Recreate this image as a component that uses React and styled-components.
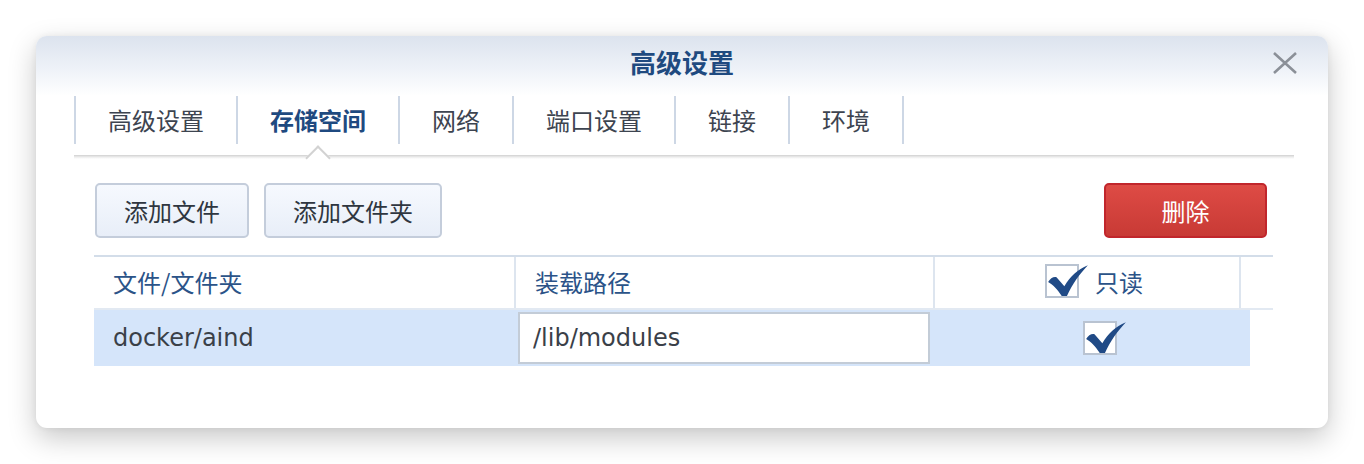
import React from "react";
import styled, { createGlobalStyle } from "styled-components";

const GlobalStyle = createGlobalStyle`
  body {
    margin: 0;
    background: #ffffff;
    font-family: "DejaVu Sans", "Noto Sans CJK SC", sans-serif;
  }
`;

const tabs = [
  { label: "高级设置" },
  { label: "存储空间", active: true },
  { label: "网络" },
  { label: "端口设置" },
  { label: "链接" },
  { label: "环境" }
];

const Check = () => (
  <CheckSvg viewBox="0 0 44 36" width="46" height="38">
    <path
      d="M3 18 C5 14.5 8.5 12.5 11 13.5 L18.5 22 C24 13 31 6 41 2 C33 10.5 26 20 21 31.5 L16 31.5 C12 25 8 21 3 18 Z"
      fill="#204a86"
    />
  </CheckSvg>
);

export default function App() {
  return (
    <Page>
      <GlobalStyle />
      <Dialog>
        <Header>
          <span />
          <Title>高级设置</Title>
          <Close>
            <svg width="26" height="22" viewBox="0 0 26 22">
              <path d="M2 1 L24 21 M24 1 L2 21" stroke="#8b9098" strokeWidth="2.6" />
            </svg>
          </Close>
        </Header>

        <TabBar>
          <Tabs>
            {tabs.map(t => (
              <Tab key={t.label} active={t.active}>
                {t.label}
              </Tab>
            ))}
          </Tabs>
          <TabLine />
        </TabBar>

        <Body>
          <Toolbar>
            <Button>添加文件</Button>
            <Button>添加文件夹</Button>
            <Spacer />
            <DangerButton>删除</DangerButton>
          </Toolbar>

          <Table>
            <HeadRow>
              <HeadCell>文件/文件夹</HeadCell>
              <HeadCell>装载路径</HeadCell>
              <HeadCell center>
                <Box>
                  <Check />
                </Box>
                只读
              </HeadCell>
              <HeadCell />
            </HeadRow>
            <DataRow>
              <DataCell>docker/aind</DataCell>
              <InputCell>
                <Input defaultValue="/lib/modules" />
              </InputCell>
              <DataCell center>
                <Box>
                  <Check />
                </Box>
              </DataCell>
            </DataRow>
          </Table>
        </Body>
      </Dialog>
    </Page>
  );
}

const Page = styled.div`
  padding: 36px;
`;

const Dialog = styled.div`
  width: 1292px;
  height: 392px;
  border-radius: 11px;
  background: #ffffff;
  overflow: hidden;
  box-shadow: 0 10px 28px rgba(0, 0, 0, 0.22), 0 0 6px rgba(0, 0, 0, 0.06);
`;

const Header = styled.div`
  height: 60px;
  display: grid;
  grid-template-columns: 1fr auto 1fr;
  align-items: center;
  padding-bottom: 10px;
  box-sizing: border-box;
  background: linear-gradient(#dce3ee, #eef2f8 55%, #ffffff);
`;

const Title = styled.div`
  font-family: "Noto Sans CJK SC", sans-serif;
  font-size: 26px;
  font-weight: 700;
  color: #1f4a80;
`;

const Close = styled.div`
  justify-self: end;
  padding-right: 30px;
  padding-top: 4px;
  display: flex;
`;

const TabBar = styled.div`
  margin: 0 34px 0 38px;
`;

const Tabs = styled.div`
  display: flex;
  height: 48px;
  border-left: 2px solid #cdd7e5;
`;

const Tab = styled.div`
  position: relative;
  display: flex;
  align-items: center;
  padding: 0 32px 2px;
  border-right: 2px solid #cdd7e5;
  font-family: "Noto Sans CJK SC", sans-serif;
  font-size: 24px;
  font-weight: ${p => (p.active ? 700 : 400)};
  color: ${p => (p.active ? "#1f4a80" : "#3d4450")};

  &::after {
    content: "";
    display: ${p => (p.active ? "block" : "none")};
    position: absolute;
    left: 50%;
    bottom: -23px;
    width: 16px;
    height: 16px;
    margin-left: -9px;
    background: #ffffff;
    border-top: 2px solid #d2d2d2;
    border-left: 2px solid #d2d2d2;
    transform: rotate(45deg);
    z-index: 2;
  }
`;

const TabLine = styled.div`
  margin-top: 11px;
  height: 4px;
  background: linear-gradient(#d0d0d0, #ececec 50%, #ffffff);
`;

const Body = styled.div`
  padding: 24px 61px 0 58px;
`;

const Toolbar = styled.div`
  display: flex;
  gap: 15px;
  padding-left: 1px;
`;

const Spacer = styled.div`
  flex: 1;
`;

const Button = styled.button`
  height: 55px;
  padding: 0 27px;
  border: 2px solid #c4cddb;
  border-radius: 5px;
  background: linear-gradient(#f6f9fe, #e8eef8);
  font-family: "Noto Sans CJK SC", sans-serif;
  font-size: 24px;
  color: #2f3640;
`;

const DangerButton = styled(Button)`
  width: 163px;
  border-color: #c1262c;
  background: linear-gradient(#de4b45, #c83a35);
  color: #ffffff;
`;

const Table = styled.div`
  margin-top: 17px;
  width: 1179px;
`;

const HeadRow = styled.div`
  display: grid;
  grid-template-columns: 422px 419px 306px 32px;
  height: 55px;
  border-top: 2px solid #d3dde9;
  border-bottom: 2px solid #e2e9f2;
  box-sizing: border-box;
`;

const HeadCell = styled.div`
  display: flex;
  align-items: center;
  justify-content: ${p => (p.center ? "center" : "flex-start")};
  gap: 16px;
  padding: ${p => (p.center ? "0 0 3px 14px" : "0 17px 3px 19px")};
  border-right: 2px solid #dde5ef;
  font-family: "Noto Sans CJK SC", sans-serif;
  font-size: 24px;
  color: #2b5388;

  &:last-child {
    border-right: none;
  }
`;

const DataRow = styled.div`
  display: grid;
  grid-template-columns: 422px 414px 320px;
  height: 56px;
  width: 1156px;
  background: #d5e5fa;
`;

const DataCell = styled.div`
  display: flex;
  align-items: center;
  justify-content: ${p => (p.center ? "center" : "flex-start")};
  padding: ${p => (p.center ? "0 0 0 20px" : "0 19px")};
  font-size: 24px;
  color: #3a4048;
`;

const InputCell = styled.div`
  padding: 2px 0 2px 2px;
  display: flex;
`;

const Input = styled.input`
  flex: 1;
  min-width: 0;
  border: 2px solid #c3ccd7;
  background: #ffffff;
  padding: 0 13px;
  font-family: "DejaVu Sans", sans-serif;
  font-size: 24px;
  color: #3a4048;
  outline: none;
`;

const Box = styled.span`
  position: relative;
  width: 34px;
  height: 34px;
  box-sizing: border-box;
  border: 2px solid #b9c3d1;
  background: #ffffff;
  flex-shrink: 0;
`;

const CheckSvg = styled.svg`
  position: absolute;
  left: -2px;
  top: -3px;
  overflow: visible;
`;
